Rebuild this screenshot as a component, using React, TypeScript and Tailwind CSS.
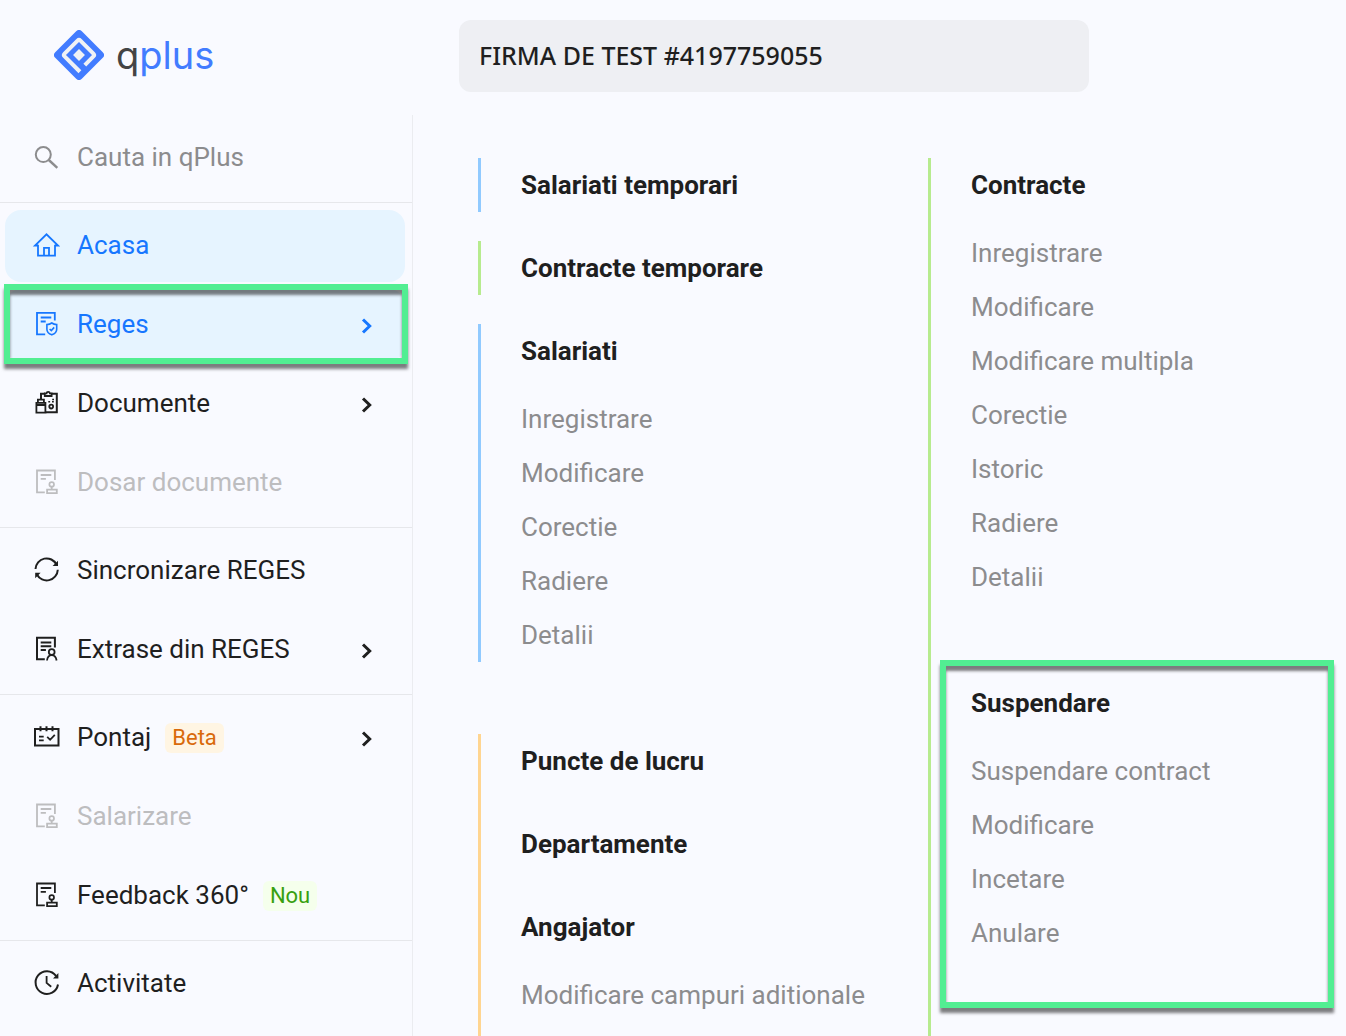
import type { ReactNode } from "react";

type MenuItem = {
    label: string;
    icon: ReactNode;
    active?: boolean;
    disabled?: boolean;
    arrow?: boolean;
    highlight?: boolean;
    badge?: { text: string; className: string };
};

function Icon({ children }: { children: ReactNode }) {
    return (
        <svg viewBox="0 0 28 28" className="size-7 shrink-0" fill="none" stroke="currentColor" strokeWidth="2" aria-hidden="true">
            {children}
        </svg>
    );
}

const searchIcon = (
    <Icon>
        <circle cx="11.3" cy="9.6" r="7.5" />
        <path d="M16.8 15 25.3 22.8" strokeWidth="2.4" />
    </Icon>
);

const homeIcon = (
    <Icon>
        <path d="M6 13.5H3L14.5 2.3 26 13.5h-3M6 12.7v11h17v-11M12 23.700v-7.900h5v7.900" strokeWidth="1.800" />
    </Icon>
);

const regesIcon = (
    <Icon>
        <path d="M13.2 23.3H5V1.800h17.800v7.700M8.700 6.500h10.600M8.700 10.500h5" strokeWidth="1.800" />
        <path d="M19.800 12c1.600 1.200 3.200 1.600 4.900 1.600v4.600c0 2.600-2 4.600-4.900 5.600-2.900-1-4.900-3-4.900-5.600v-4.600c1.700 0 3.300-.4 4.900-1.600z" strokeWidth="1.600" />
        <path d="m17.600 18 1.700 1.600 2.900-3.200" strokeWidth="1.600" />
    </Icon>
);

const documentsIcon = (
    <Icon>
        <path d="M9 9.500V3.700h4M19.500 3.700h5.300v18.500H14" />
        <path d="M12.800 3.400h1.700c.2-2.100 3.200-2.100 3.400 0h1.700v2.600h-6.800z" strokeWidth="1.800" />
        <path d="M4.400 12.800h9v9.900h-9zM5.900 12.500V9.600h6v2.900M4.400 15h9" strokeWidth="1.800" />
        <circle cx="19.200" cy="16.600" r="1.900" strokeWidth="1.800" />
        <path d="M16.300 11.700h1.800M20 11.700h1.800M20.200 9.500H22" strokeWidth="1.600" />
    </Icon>
);

const stampIcon = (
    <Icon>
        <path d="M12.800 23.300H5V1.500h17.900V11M8.700 6h10.600M8.700 9.800h5.200" strokeWidth="1.800" />
        <circle cx="19.700" cy="15.400" r="2.300" strokeWidth="1.700" />
        <path d="M19.700 17.700v2.600M15.100 24.200v-3.500h9.700v3.500z" strokeWidth="1.800" />
    </Icon>
);

const syncIcon = (
    <Icon>
        <path d="M3.500 12A11.100 11.100 0 0 1 24.500 7.500M25.800 12.800A11.100 11.100 0 0 1 4.900 17.500" />
        <path d="M26 3.700v5.400h-5.400zM3.200 21.200v-5.400h5.400z" fill="currentColor" stroke="none" />
    </Icon>
);

const extractIcon = (
    <Icon>
        <path d="M12.800 23.300H5V1.800h17.900v9.600M8.700 6.500h10.600M8.700 10.300h10.600M8.700 14.100h5.200" />
        <circle cx="19.700" cy="16" r="2.900" strokeWidth="1.800" />
        <path d="M15 24.500c.4-3.200 2.400-5.300 4.700-5.300s4.400 2.100 4.900 5.300" strokeWidth="1.800" />
    </Icon>
);

const calendarIcon = (
    <Icon>
        <path d="M3 5h23.500v16.500H3zM8.500 2.200v5M14.500 2.200v5M20.500 2.200v5" />
        <path d="M7 12.600h4.700M7 16.400h4.700M15.200 12.900l2.900 2.900 4.700-5" strokeWidth="1.800" />
    </Icon>
);

const clockIcon = (
    <Icon>
        <path d="M26 14.500A11.300 11.300 0 1 1 24 5.900" />
        <path d="M14.600 6v6.900l4.600 3.900" strokeWidth="1.800" />
        <path d="M26.400 3v5.400H21z" fill="currentColor" stroke="none" />
    </Icon>
);

const menuGroups: MenuItem[][] = [
    [
        { label: "Acasa", icon: homeIcon, active: true },
        { label: "Reges", icon: regesIcon, active: true, arrow: true, highlight: true },
        { label: "Documente", icon: documentsIcon, arrow: true },
        { label: "Dosar documente", icon: stampIcon, disabled: true },
    ],
    [
        { label: "Sincronizare REGES", icon: syncIcon },
        { label: "Extrase din REGES", icon: extractIcon, arrow: true },
    ],
    [
        { label: "Pontaj", icon: calendarIcon, arrow: true, badge: { text: "Beta", className: "bg-[#fff5e3] text-[#d96a0b]" } },
        { label: "Salarizare", icon: stampIcon, disabled: true },
        { label: "Feedback 360°", icon: stampIcon, badge: { text: "Nou", className: "bg-[#f5ffec] text-[#38a010]" } },
    ],
    [{ label: "Activitate", icon: clockIcon }],
];

// green frame with its drop shadow, drawn over the content
function Frame({ className }: { className: string }) {
    return (
        <span
            className={`pointer-events-none absolute z-10 border-6 border-[#52ee92] shadow-[0_5px_3px_rgba(0,0,0,0.5),inset_0_5px_3px_rgba(0,0,0,0.5)] ${className}`}
        />
    );
}

function Logo() {
    return (
        <a href="#" className="flex items-center gap-3 pt-[30px] pl-[54px]" aria-label="qplus">
            <svg viewBox="-25 -25 50 50" className="size-[50px]" aria-hidden="true">
                <g transform="rotate(45)">
                    <rect x="-18.800" y="-18.800" width="37.600" height="37.600" rx="4" fill="#427cff" />
                    <path
                        d="M11.200 3V-9.200a2 2 0 0 0-2-2H-9.200a2 2 0 0 0-2 2V9.200a2 2 0 0 0 2 2H12.500"
                        fill="none"
                        stroke="#f0f2f5"
                        strokeWidth="4"
                    />
                    <rect x="-4.200" y="-4.200" width="8.400" height="8.400" fill="#f0f2f5" />
                </g>
            </svg>
            <span className="font-['Inter','Liberation_Sans',sans-serif] text-[38px] leading-[50px] text-[#427cff]">
                <span className="text-[#444]">q</span>plus
            </span>
        </a>
    );
}

function MenuRow({ item }: { item: MenuItem }) {
    let color = "text-[#1f1f1f]";
    if (item.active) color = "bg-[#e6f4ff] text-[#1677ff]";
    if (item.disabled) color = "text-[#bdbdbf]";

    return (
        <li className="relative">
            <button type="button" disabled={item.disabled} className={`flex h-[72px] w-full items-center rounded-2xl pr-8 pl-[27px] ${color}`}>
                {item.icon}
                <span className="ml-[17px] pb-0.5">{item.label}</span>
                {item.badge && (
                    <span className={`ml-3.5 rounded-md px-[7px] text-[22px] leading-[30px] ${item.badge.className}`}>{item.badge.text}</span>
                )}
                {item.arrow && (
                    <svg viewBox="0 0 12 16" className="mt-0.5 ml-auto h-4 w-3" fill="none" stroke="currentColor" strokeWidth="3" aria-hidden="true">
                        <path d="M2 1.500 8.700 8 2 14.500" />
                    </svg>
                )}
            </button>
            {item.highlight && <Frame className="-top-[5px] -right-[3px] -bottom-[3px] -left-px" />}
        </li>
    );
}

function Section({ title, links = [] }: { title: string; links?: string[] }) {
    return (
        <section className="pl-10">
            <h2 className="leading-[54px] font-bold text-[#1f1f1f]">{title}</h2>
            {links.length > 0 && (
                <ul className="mt-[14px]">
                    {links.map((link) => (
                        <li key={link} className="leading-[54px]">
                            <a href="#">{link}</a>
                        </li>
                    ))}
                </ul>
            )}
        </section>
    );
}

export default function App() {
    return (
        <div className="flex min-h-screen flex-col bg-[#f9faff] font-['Roboto','Liberation_Sans',sans-serif] text-[26px] text-[#8c8c8e]">
            <header className="flex h-[115px] items-start">
                <div className="w-[459px] shrink-0">
                    <Logo />
                </div>
                <button
                    type="button"
                    className="mt-5 h-[72px] w-full max-w-[630px] rounded-xl bg-[#eeeff3] px-5 text-left font-['Noto_Sans',sans-serif] text-[25px] font-medium text-[#1f1f1f]"
                >
                    FIRMA DE TEST #4197759055
                </button>
            </header>

            <div className="flex flex-1">
                {/* Sidebar */}
                <aside className="w-[413px] shrink-0 border-r border-[#ebecf0]">
                    <label className="flex h-[87px] items-center pl-8">
                        {searchIcon}
                        <input
                            type="text"
                            aria-label="Cauta in qPlus"
                            placeholder="Cauta in qPlus"
                            className="ml-[17px] w-full min-w-0 bg-transparent pb-0.5 outline-none placeholder:text-[#8c8c8e]"
                        />
                    </label>
                    <nav>
                        {menuGroups.map((group, i) => (
                            <ul key={i} className="flex flex-col gap-[7px] border-t border-[#e6e7eb] pt-[7px] pr-[7px] pb-2 pl-[5px]">
                                {group.map((item) => (
                                    <MenuRow key={item.label} item={item} />
                                ))}
                            </ul>
                        ))}
                    </nav>
                </aside>

                {/* Reges submenu */}
                <main className="grid flex-1 grid-cols-[minmax(0,450px)_1fr] pt-[43px] pl-[65px]">
                    <div className="flex flex-col">
                        <div className="border-l-3 border-[#91caff]">
                            <Section title="Salariati temporari" />
                        </div>
                        <div className="mt-[29px] border-l-3 border-[#b7eb8f]">
                            <Section title="Contracte temporare" />
                        </div>
                        <div className="mt-[29px] border-l-3 border-[#91caff]">
                            <Section title="Salariati" links={["Inregistrare", "Modificare", "Corectie", "Radiere", "Detalii"]} />
                        </div>
                        <div className="mt-[72px] flex flex-1 flex-col gap-[29px] border-l-3 border-[#ffd591]">
                            <Section title="Puncte de lucru" />
                            <Section title="Departamente" />
                            <Section title="Angajator" links={["Modificare campuri aditionale"]} />
                        </div>
                    </div>

                    <div className="flex flex-col gap-[72px] border-l-3 border-[#b7eb8f]">
                        <Section
                            title="Contracte"
                            links={["Inregistrare", "Modificare", "Modificare multipla", "Corectie", "Istoric", "Radiere", "Detalii"]}
                        />
                        <div className="relative">
                            <Section title="Suspendare" links={["Suspendare contract", "Modificare", "Incetare", "Anulare"]} />
                            <Frame className="-top-4 right-3 -bottom-12 left-[9px]" />
                        </div>
                    </div>
                </main>
            </div>
        </div>
    );
}
